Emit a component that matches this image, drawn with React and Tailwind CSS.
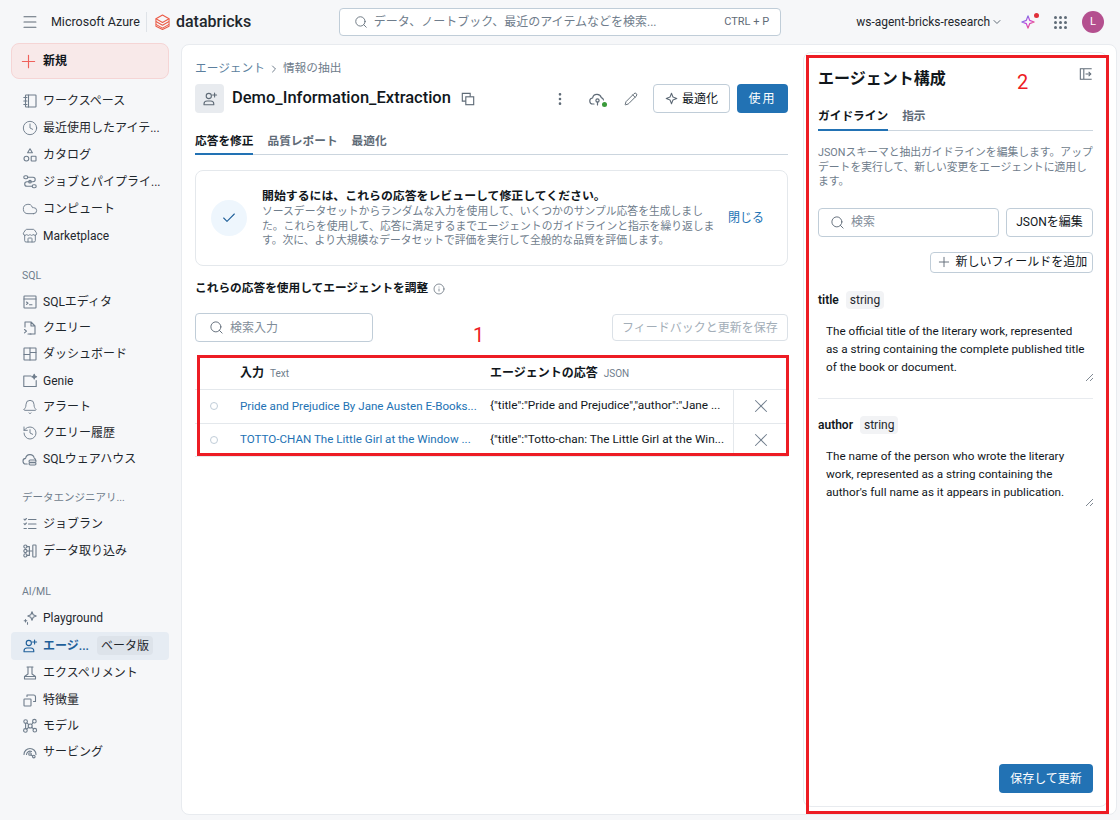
import {
  Menu, Search, ChevronDown, ChevronRight, MoreVertical, Pencil, Plus, X, Check, Info,
  Clock, Cloud, Store, Bell, History,
} from 'lucide-react';

// 16px line icons in the style of the product's own set
function Ico({ children, className = 'w-4 h-4 text-[#6f7d8c]' }) {
  return (
    <svg viewBox="0 0 16 16" fill="none" stroke="currentColor" strokeWidth="1.1" strokeLinecap="round" strokeLinejoin="round" className={`${className} shrink-0`}>
      {children}
    </svg>
  );
}

const WorkspaceIcon = () => <Ico><rect x="3.5" y="2" width="10.5" height="12" rx="0.6" /><path d="M6.5 2v12M1.8 4.5h3.2M1.8 8h3.2M1.8 11.5h3.2" /></Ico>;
const CatalogIcon = () => <Ico><path d="M8 1.8l2.4 4H5.6z" /><rect x="2" y="9.2" width="4.8" height="4.8" rx="2.4" /><rect x="9.2" y="9.2" width="4.8" height="4.8" rx="0.6" /></Ico>;
const JobsIcon = () => <Ico><rect x="1.8" y="1.8" width="4" height="3" rx="1.5" /><path d="M5.8 3.3h5.2a2 2 0 010 4.4H5a2 2 0 000 4.6h5.2" /><circle cx="8" cy="7.7" r="1.3" /><rect x="10.2" y="10.8" width="4" height="3" rx="1.5" /></Ico>;
const SqlEditorIcon = () => <Ico><rect x="2" y="2" width="12" height="12" rx="0.6" /><path d="M2 5h12M4.5 8l1.5 1.2-1.5 1.2M7.5 10.8h2.5" /></Ico>;
const QueryIcon = () => <Ico><path d="M3 7V2h6l4 4v8H8M9 2v4h4" /><path d="M2.5 9.5l2 1.7-2 1.7M6 14h3" /></Ico>;
const DashboardIcon = () => <Ico><rect x="2" y="2" width="12" height="12" rx="0.4" /><path d="M8 2v12M2 8.5h6M8 6.5h6" /></Ico>;
const GenieIcon = () => <Ico><path d="M9 3H1.8v10.5h12.4V7.5" /><path d="M12.2 1.3l.7 1.7 1.7.7-1.7.7-.7 1.7-.7-1.7-1.7-.7 1.7-.7z" fill="currentColor" /></Ico>;
const WarehouseIcon = () => <Ico><path d="M5.2 13H4a2.8 2.8 0 01-.4-5.6 4.4 4.4 0 018.6-.5 3 3 0 011.6 2.4" /><rect x="7" y="9" width="7" height="2.4" rx="1.2" /><rect x="7" y="11.6" width="7" height="2.4" rx="1.2" /></Ico>;
const RunsIcon = () => <Ico><path d="M6.5 3.5h7.5M6.5 8h7.5M6.5 12.5h7.5M2 3.2l.9.9L4.4 2.5M2 7.7l.9.9 1.5-1.6M2 12.5h2.4" /></Ico>;
const IngestIcon = () => <Ico><rect x="1.8" y="2" width="3.2" height="3.2" rx="1.6" /><rect x="1.8" y="6.4" width="3.2" height="3.2" rx="1.6" /><rect x="1.8" y="10.8" width="3.2" height="3.2" rx="1.6" /><path d="M5 3.6h2.4v8.8H5M5 8h5" /><rect x="10.8" y="2" width="3.2" height="12" rx="0.6" /></Ico>;
const PlaygroundIcon = () => <Ico><path d="M10 1.8l1.2 3 3 1.2-3 1.2-1.2 3-1.2-3-3-1.2 3-1.2z" /><path d="M3.5 9.5v2.5M2.2 10.8h2.6M5.5 12.5v1.8" /></Ico>;
const AgentIcon = ({ className }) => <Ico className={className}><circle cx="6.8" cy="5" r="2.6" /><path d="M2 13.8v-.8a3 3 0 013-3h3.8a3 3 0 013 3v.8z" /><path d="M12.6 2v4M10.6 4h4" /></Ico>;
const ExperimentIcon = () => <Ico><path d="M5 2h6M6 2v7l-3.5 2.5V14h11v-2.5L10 9V2M2.5 11.5h11" /></Ico>;
const FeatureIcon = () => <Ico><rect x="2" y="7" width="7" height="7" rx="0.6" /><path d="M5 4.5V3h6.5a2 2 0 012 2v4.5H11.5" /></Ico>;
const ModelIcon = () => <Ico><circle cx="3.6" cy="3.6" r="1.8" /><circle cx="12.4" cy="3.2" r="1.8" /><circle cx="8.2" cy="8" r="2" /><circle cx="3.4" cy="12.4" r="1.8" /><circle cx="12.8" cy="12.2" r="1.8" /><path d="M5 5l1.8 1.6M11 4.6L9.6 6.5M6.6 9.4L4.8 11M9.8 9.4l1.7 1.5M3.6 5.4v5.2" /></Ico>;
const ServingIcon = () => <Ico><path d="M2 10.5a6 6 0 0112 0M4.5 10.5a3.5 3.5 0 015-3" /><circle cx="8" cy="10" r="1.3" /><circle cx="11.8" cy="12.6" r="1.3" /><path d="M9 11l1.7 1" /></Ico>;

const sections = [
  {
    rowClass: 'h-[27px]',
    items: [
      { label: 'ワークスペース', icon: <WorkspaceIcon /> },
      { label: '最近使用したアイテ...', icon: <Clock className="w-4 h-4 text-[#6f7d8c]" strokeWidth={1.4} /> },
      { label: 'カタログ', icon: <CatalogIcon /> },
      { label: 'ジョブとパイプライ...', icon: <JobsIcon /> },
      { label: 'コンピュート', icon: <Cloud className="w-4 h-4 text-[#6f7d8c]" strokeWidth={1.4} /> },
      { label: 'Marketplace', icon: <Store className="w-4 h-4 text-[#6f7d8c]" strokeWidth={1.4} /> },
    ],
  },
  {
    title: 'SQL',
    gap: 'mt-[13.5px]',
    rowClass: 'h-[26.2px]',
    items: [
      { label: 'SQLエディタ', icon: <SqlEditorIcon /> },
      { label: 'クエリー', icon: <QueryIcon /> },
      { label: 'ダッシュボード', icon: <DashboardIcon /> },
      { label: 'Genie', icon: <GenieIcon /> },
      { label: 'アラート', icon: <Bell className="w-4 h-4 text-[#6f7d8c]" strokeWidth={1.4} /> },
      { label: 'クエリー履歴', icon: <History className="w-4 h-4 text-[#6f7d8c]" strokeWidth={1.4} /> },
      { label: 'SQLウェアハウス', icon: <WarehouseIcon /> },
    ],
  },
  {
    title: 'データエンジニアリ...',
    gap: 'mt-[13px]',
    rowClass: 'h-[26.2px]',
    items: [
      { label: 'ジョブラン', icon: <RunsIcon /> },
      { label: 'データ取り込み', icon: <IngestIcon /> },
    ],
  },
  {
    title: 'AI/ML',
    gap: 'mt-[15.5px]',
    rowClass: 'h-[26.4px]',
    items: [
      { label: 'Playground', icon: <PlaygroundIcon /> },
      { label: 'エージ...', icon: <AgentIcon className="w-4 h-4 text-[#1f5f99]" />, active: true, badge: 'ベータ版' },
      { label: 'エクスペリメント', icon: <ExperimentIcon /> },
      { label: '特徴量', icon: <FeatureIcon /> },
      { label: 'モデル', icon: <ModelIcon /> },
      { label: 'サービング', icon: <ServingIcon /> },
    ],
  },
];

const rows = [
  {
    input: 'Pride and Prejudice By Jane Austen E-Books...',
    output: '{"title":"Pride and Prejudice","author":"Jane ...',
  },
  {
    input: 'TOTTO-CHAN The Little Girl at the Window ...',
    output: '{"title":"Totto-chan: The Little Girl at the Win...',
  },
];

const fields = [
  {
    name: 'title',
    lines: [
      'The official title of the literary work, represented',
      'as a string containing the complete published title',
      'of the book or document.',
    ],
  },
  {
    name: 'author',
    lines: [
      'The name of the person who wrote the literary',
      'work, represented as a string containing the',
      "author's full name as it appears in publication.",
    ],
  },
];

function Logo() {
  return (
    <svg viewBox="0 0 16 17" className="w-[15px] h-[16px]" fill="none" stroke="#eb5a46" strokeWidth="1.1" strokeLinejoin="round">
      <path d="M8 1L15 5 8 9 1 5z" />
      <path d="M1 8l7 4 7-4M1 11l7 4 7-4" />
      <path d="M1 5v8l7 3.5 7-3.5V5" />
    </svg>
  );
}

function Sidebar() {
  return (
    <aside className="w-[181px] shrink-0 pl-[11px] pr-3">
      <button className="-mt-px w-[158px] h-9 flex items-center gap-1 pl-[6px] rounded-lg bg-[#f8e9e9] border border-[#f5d5d5] text-xs font-semibold text-[#11171c]">
        <Plus className="w-[21px] h-[21px] text-[#f0605a]" strokeWidth={1.3} />
        新規
      </button>
      <div className="mt-[8.5px]">
        {sections.map((section, idx) => (
          <div key={idx} className={section.gap}>
            {section.title && (
              <div className="h-[26px] pl-[11px] flex items-center text-[10.5px] text-[#6f7d8c]">{section.title}</div>
            )}
            {section.items.map((item) => (
              <div
                key={item.label}
                className={`flex items-center gap-[5px] pl-[11px] text-xs rounded ${
                  item.active ? 'h-[28.5px] bg-[#e6ecf3] text-[#1f5f99] font-semibold' : `${section.rowClass} text-[#1f272d]`
                }`}
              >
                {item.icon}
                <span className="whitespace-nowrap">{item.label}</span>
                {item.badge && (
                  <span className="ml-[3px] px-1 h-[19px] flex items-center rounded bg-[#dde3ea] text-[#1f272d] font-normal">{item.badge}</span>
                )}
              </div>
            ))}
          </div>
        ))}
      </div>
    </aside>
  );
}

function MainColumn() {
  return (
    <main className="flex-1 min-w-0 pl-[13px] pr-[15px] pt-[16px]">
      <div className="flex items-center gap-[3px] h-[16px] text-[11.7px]">
        <span className="text-[#5c7f9e]">エージェント</span>
        <ChevronRight className="w-3 h-3 text-[#6f7d8c]" />
        <span className="text-[#6f7d8c]">情報の抽出</span>
      </div>

      <div className="mt-[7px] flex items-center h-[29px]">
        <div className="w-[29px] h-[29px] rounded bg-[#e8ebef] flex items-center justify-center">
          <AgentIcon className="w-4 h-4 text-[#5f6b77]" />
        </div>
        <h1 className="ml-2 text-[16.5px] font-medium text-[#11171c]">Demo_Information_Extraction</h1>
        <svg viewBox="0 0 16 16" className="ml-[10px] w-[14px] h-[14px] text-[#5f6b77]" fill="none" stroke="currentColor" strokeWidth="1.3">
          <rect x="5.5" y="5.5" width="9" height="9" />
          <path d="M5.5 10.5h-4v-9h9v4" />
        </svg>
        <div className="ml-auto flex items-center">
          <MoreVertical className="w-4 h-4 text-[#5f6b77]" />
          <div className="relative ml-[21px]">
            <svg viewBox="0 0 16 16" className="w-4 h-4 text-[#5f6b77]" fill="none" stroke="currentColor" strokeWidth="1.2" strokeLinecap="round">
              <path d="M5 13H4a3 3 0 01-.4-6A4.5 4.5 0 0112.3 6.6 3 3 0 0114.5 9" />
              <circle cx="8.5" cy="9.5" r="1.6" />
              <path d="M8.5 11.1V14" />
            </svg>
            <span className="absolute right-[-2px] bottom-0 w-[5px] h-[5px] rounded-full bg-[#3a9a3a]" />
          </div>
          <Pencil className="ml-[19px] w-[14px] h-[14px] text-[#4f5b67]" strokeWidth={1.5} />
          <button className="ml-[15px] w-[77px] h-[29px] flex items-center justify-center gap-1 rounded border border-[#c0cdd8] text-xs text-[#11171c]">
            <svg viewBox="0 0 16 16" className="w-[13px] h-[13px] text-[#5f6b77]" fill="none" stroke="currentColor" strokeWidth="1.3" strokeLinejoin="round">
              <path d="M8 1.5l1.8 4.7 4.7 1.8-4.7 1.8L8 14.5l-1.8-4.7L1.5 8l4.7-1.8z" />
            </svg>
            最適化
          </button>
          <button className="ml-[7px] w-[51px] h-[29px] rounded bg-[#2272b4] text-xs text-white tracking-[2px]">使用</button>
        </div>
      </div>

      <div className="mt-[18px] flex gap-[14px] h-[24px] border-b border-[#cbd5de] text-[11.7px] leading-[20px] font-semibold">
        <span className="h-[24px] border-b-2 border-[#2272b4] text-[#11171c]">応答を修正</span>
        <span className="text-[#5f6b77]">品質レポート</span>
        <span className="text-[#5f6b77]">最適化</span>
      </div>

      <div className="mt-[15px] h-[96px] rounded-lg border border-[#e4e8ec] flex items-center pl-[15px] pr-[23px]">
        <div className="w-9 h-9 rounded-full bg-[#eef6fd] flex items-center justify-center shrink-0">
          <Check className="w-4 h-4 text-[#1f5f99]" strokeWidth={1.6} />
        </div>
        <div className="ml-[15px] flex-1 min-w-0">
          <div className="text-[11.9px] font-semibold text-[#11171c] leading-[18px]">開始するには、これらの応答をレビューして修正してください。</div>
          <p className="text-[10.8px] leading-[14.5px] text-[#6f7d8c] whitespace-nowrap">
            ソースデータセットからランダムな入力を使用して、いくつかのサンプル応答を生成しまし<br />
            た。これらを使用して、応答に満足するまでエージェントのガイドラインと指示を繰り返しま<br />
            す。次に、より大規模なデータセットで評価を実行して全般的な品質を評価します。
          </p>
        </div>
        <span className="ml-auto text-xs text-[#2272b4] whitespace-nowrap">閉じる</span>
      </div>

      <div className="mt-[14px] h-[18px] flex items-center gap-[5px] text-[11.7px] font-semibold text-[#11171c]">
        これらの応答を使用してエージェントを調整
        <Info className="w-3 h-3 text-[#5f6b77]" strokeWidth={1.5} />
      </div>

      <div className="mt-[15px] flex items-center justify-between">
        <div className="w-[178px] h-[29px] flex items-center gap-[6px] pl-[13px] rounded border border-[#c0cdd8]">
          <Search className="w-[15px] h-[15px] text-[#5f6b77]" strokeWidth={1.5} />
          <span className="text-xs text-[#7f8c98]">検索入力</span>
        </div>
        <button className="w-[176px] h-[27px] rounded border border-[#dbe1e7] text-xs text-[#a3aeb8]">フィードバックと更新を保存</button>
      </div>

      <div className="relative mt-[15px] text-xs">
        <div className="h-[33px] flex items-center border-b border-[#e4e8ec]">
          <div className="w-[45px]" />
          <div className="w-[250px] flex items-baseline gap-[6px]">
            <span className="font-semibold text-[#11171c]">入力</span>
            <span className="text-[10px] text-[#6f7d8c]">Text</span>
          </div>
          <div className="flex items-baseline gap-[6px]">
            <span className="font-semibold text-[#11171c]">エージェントの応答</span>
            <span className="text-[10px] text-[#6f7d8c]">JSON</span>
          </div>
        </div>
        {rows.map((row) => (
          <div key={row.input} className="h-[33.5px] flex items-center border-b border-[#e4e8ec]">
            <div className="w-[45px] pl-[15px]">
              <span className="block w-2 h-2 rounded-full border border-[#c0cdd8]" />
            </div>
            <div className="w-[250px] text-[11.6px] text-[#2272b4] whitespace-nowrap">{row.input}</div>
            <div className="w-[243px] text-[11.8px] text-[#11171c] whitespace-nowrap">{row.output}</div>
            <div className="flex-1 self-stretch border-l border-[#e4e8ec] flex items-center justify-center">
              <X className="w-[22px] h-[22px] text-[#6f7d8c]" strokeWidth={1.1} />
            </div>
          </div>
        ))}
      </div>
    </main>
  );
}

function ConfigPanel() {
  return (
    <section className="w-[305px] shrink-0 mt-[7px] mb-[7px] mr-[8px] rounded-lg border border-[#e8ebef] flex flex-col pl-[14px] pr-[14px] pt-[14px] pb-[13px]">
      <div className="flex items-start justify-between h-[24px]">
        <h2 className="text-[16px] font-semibold text-[#11171c] leading-[24px]">エージェント構成</h2>
        <svg viewBox="0 0 16 16" className="w-[14px] h-[14px] text-[#5f6b77]" fill="none" stroke="currentColor" strokeWidth="1.2">
          <path d="M14.5 2H1.5v12h13M5.5 2v12M7.5 8h6M11 5.5L13.5 8 11 10.5" />
        </svg>
      </div>
      <div className="mt-[16px] flex gap-[14px] h-[24px] border-b border-[#cbd5de] text-[11.7px] leading-[18px] font-semibold">
        <span className="h-[24px] border-b-2 border-[#2272b4] text-[#11171c]">ガイドライン</span>
        <span className="text-[#5f6b77]">指示</span>
      </div>
      <p className="mt-[15px] text-[10.8px] leading-[14.5px] text-[#6f7d8c] whitespace-nowrap">
        JSONスキーマと抽出ガイドラインを編集します。アップ<br />
        デートを実行して、新しい変更をエージェントに適用し<br />
        ます。
      </p>
      <div className="mt-[18px] flex gap-[7px]">
        <div className="flex-1 h-[29px] flex items-center gap-[6px] pl-[11px] rounded border border-[#c0cdd8]">
          <Search className="w-[15px] h-[15px] text-[#5f6b77]" strokeWidth={1.5} />
          <span className="text-xs text-[#7f8c98]">検索</span>
        </div>
        <button className="w-[87px] h-[29px] rounded border border-[#c0cdd8] text-xs text-[#11171c]">JSONを編集</button>
      </div>
      <div className="mt-[15px] flex justify-end">
        <button className="w-[163px] h-[21px] flex items-center justify-center gap-1 rounded border border-[#c0cdd8] text-xs text-[#11171c]">
          <Plus className="w-[16px] h-[16px] text-[#5f6b77]" strokeWidth={1.4} />
          新しいフィールドを追加
        </button>
      </div>

      <div className="mt-[18px]">
        {fields.map((field, idx) => (
          <div key={field.name} className={idx > 0 ? 'mt-[16px] pt-[17px] border-t border-[#e8ebef]' : ''}>
            <div className="flex items-center gap-[7px] h-[18px]">
              <span className="text-xs font-semibold text-[#11171c]">{field.name}</span>
              <span className="h-[18px] px-1 flex items-center rounded bg-[#f2f3f5] text-xs text-[#1f272d]">string</span>
            </div>
            <div className="relative mt-[13px] h-[60px] pl-2 text-[11.7px] leading-[18px] text-[#11171c] whitespace-nowrap">
              {field.lines.map((line) => (
                <div key={line}>{line}</div>
              ))}
              <svg viewBox="0 0 8 8" className="absolute right-0 bottom-px w-2 h-2 text-[#5f6b77]" stroke="currentColor" strokeWidth="0.8">
                <path d="M1 8l7-7M5 8l3-3" />
              </svg>
            </div>
          </div>
        ))}
      </div>

      <div className="mt-auto flex justify-end">
        <button className="w-[94px] h-[29px] rounded bg-[#2272b4] text-xs text-white">保存して更新</button>
      </div>
    </section>
  );
}

export default function App() {
  return (
    <div className="relative w-[1120px] h-[820px] overflow-hidden bg-[#f6f7f9] font-['Roboto','Noto_Sans_CJK_JP',sans-serif]">
      {/* Top bar */}
      <header className="h-[44px] flex items-center pl-[21px] pr-[16px]">
        <Menu className="w-[18px] h-[18px] text-[#5f6b77]" strokeWidth={1.4} />
        <span className="ml-[12px] w-[87px] text-[12.5px] text-[#1f272d] whitespace-nowrap">Microsoft Azure</span>
        <span className="ml-2 w-px h-5 bg-[#dfe3e8]" />
        <span className="ml-2"><Logo /></span>
        <span className="ml-[6px] w-[77px] text-[16px] font-medium text-[#1f272d]">databricks</span>
        <div className="ml-[86px] w-[444px] h-[28px] flex items-center pl-[14px] pr-[11px] rounded border border-[#c0cdd8] bg-white">
          <Search className="w-[14px] h-[14px] text-[#5f6b77]" strokeWidth={1.5} />
          <span className="ml-[6px] text-xs text-[#6f7d8c]">データ、ノートブック、最近のアイテムなどを検索...</span>
          <span className="ml-auto text-[11px] text-[#5f6b77]">CTRL + P</span>
        </div>
        <span className="ml-[75px] w-[133px] text-xs text-[#1f272d] whitespace-nowrap">ws-agent-bricks-research</span>
        <ChevronDown className="ml-[2px] w-3 h-3 text-[#5f6b77]" />
        <div className="relative ml-[18px]">
          <svg viewBox="0 0 16 16" className="w-[14px] h-[14px]" fill="none" strokeWidth="1.4" strokeLinejoin="round">
            <defs>
              <linearGradient id="spark" x1="0" y1="0" x2="1" y2="1">
                <stop offset="0" stopColor="#4299e0" />
                <stop offset="0.5" stopColor="#ca42e0" />
                <stop offset="1" stopColor="#ff5f46" />
              </linearGradient>
            </defs>
            <path d="M8 1l1.9 5.1L15 8l-5.1 1.9L8 15l-1.9-5.1L1 8l5.1-1.9z" stroke="url(#spark)" />
          </svg>
          <span className="absolute -top-[2px] -right-[4px] w-[5px] h-[5px] rounded-full bg-[#e0303a]" />
        </div>
        <div className="ml-[19px] grid grid-cols-3 gap-[2px]">
          {[1, 2, 3, 4, 5, 6, 7, 8, 9].map((n) => (
            <span key={n} className="w-[3px] h-[3px] rounded-full bg-[#5f6b77]" />
          ))}
        </div>
        <span className="ml-[15px] w-[22px] h-[22px] rounded-full bg-[#b4508f] text-white text-[11px] flex items-center justify-center">L</span>
      </header>

      <div className="flex h-[776px]">
        <Sidebar />
        {/* Content card */}
        <div className="flex-1 mr-[3px] mb-[5px] flex bg-white rounded-lg border border-[#e8ebef] overflow-hidden">
          <MainColumn />
          <ConfigPanel />
        </div>
      </div>

      {/* Red annotation boxes */}
      <div className="absolute left-[197px] top-[355px] w-[592px] h-[101px] border-[3px] border-[#ed1c24]" />
      <span className="absolute left-[473px] top-[320px] text-[20px] text-[#ed1c24]">1</span>
      <div className="absolute left-[806px] top-[55px] w-[303px] h-[759px] border-[3px] border-[#ed1c24]" />
      <span className="absolute left-[1017px] top-[67px] text-[20px] text-[#ed1c24]">2</span>
    </div>
  );
}
